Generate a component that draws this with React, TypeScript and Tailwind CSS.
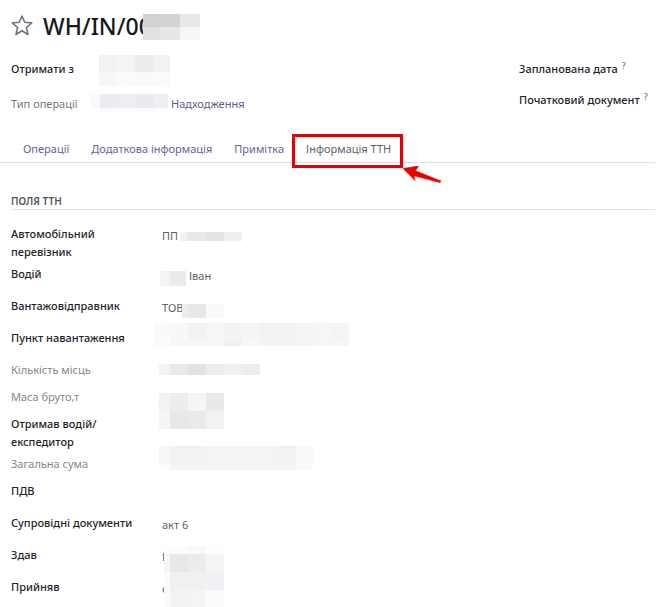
import type { ReactNode } from "react";

type MaskProps = { cols: number[]; rows: number[]; colors: string[]; className: string };

/* Pixelated block that hides private data. */
function Mask({ cols, rows, colors, className }: MaskProps) {
  return (
    <span
      aria-hidden="true"
      className={`pointer-events-none absolute z-10 grid ${className}`}
      style={{
        gridTemplateColumns: cols.map((c) => `${c}px`).join(" "),
        gridTemplateRows: rows.map((r) => `${r}px`).join(" "),
      }}
    >
      {colors.map((color, i) => (
        <span key={i} style={{ backgroundColor: color }} />
      ))}
    </span>
  );
}

type FieldProps = { label: string; muted?: boolean; space: string; children?: ReactNode };

function Field({ label, muted, space, children }: FieldProps) {
  return (
    <div className={`flex ${space}`}>
      <dt className={`w-[151px] shrink-0 pr-5 ${muted ? "text-[#83878c]" : "font-medium text-[#1f2329]"}`}>{label}</dt>
      <dd className="relative min-w-0 flex-1 pt-0.5 text-[#5c6168]">{children}</dd>
    </div>
  );
}

function Help() {
  return <sup className="ml-1 text-[9px] leading-none font-normal text-[#5c5a8c]">?</sup>;
}

const tabs = ["Операції", "Додаткова інформація", "Примітка"];

export default function App() {
  return (
    <main className="min-h-screen overflow-hidden bg-white pr-[5px] font-['Noto_Sans','Open_Sans',sans-serif] text-[11px] leading-[18px]">
      <header className="flex items-center gap-2.5 pt-2 pl-[11px]">
        <button type="button" aria-label="Обране" className="text-[#6f757c]">
          <svg width="22" height="22" viewBox="0 0 22 22" fill="none" stroke="currentColor" strokeWidth="1.6" strokeLinejoin="round">
            <path d="M11 1 13.7 7.3 20.7 7.9 15.4 12.5 17 19.5 11 15.8 5 19.5 6.6 12.5 1.3 7.9 8.3 7.3Z" />
          </svg>
        </button>
        <h1 className="relative text-[23px] leading-9 font-medium text-[#15181c]">
          WH/IN/00
          <Mask className="top-1.5 left-[100px]" cols={[17, 20, 20]} rows={[13, 13]} colors={["#d2d2d2", "#d3d3d3", "#e6e8ea", "#e2e2e2", "#e5e6e8", "#f6f6f6"]} />
        </h1>
      </header>

      <div className="flex justify-between pt-4 pl-[11px]">
        <dl>
          <div className="flex pb-[17px]">
            <dt className="w-20 font-medium text-[#1f2329]">Отримати з</dt>
            <dd className="relative">
              <Mask className="-top-[5px] left-2" cols={[18, 18, 18, 17]} rows={[17, 14]} colors={["#f1f2f4", "#f3f4f4", "#ecedef", "#f2f2f3", "#f7f7f7", "#fbfbfb", "#f9f9f9", "#fbfbfb"]} />
            </dd>
          </div>
          <div className="flex">
            <dt className="w-20 text-[#75797e]">Тип операції</dt>
            <dd className="relative pl-20">
              <Mask className="-top-px left-0" cols={[9, 18, 18, 18, 14]} rows={[14, 4]} colors={["#fafafa", "#ecebf2", "#ededf2", "#ebeaf0", "#eeeef4", "#ffffff", "#fbfbfc", "#fcfcfc", "#fbfbfc", "#fcfcfc"]} />
              <a href="#operation" className="text-[#5f5b8e]">Надходження</a>
            </dd>
          </div>
        </dl>
        <dl className="w-[136px] font-medium whitespace-nowrap text-[#1f2329]">
          <dt className="pb-[13px]">Запланована дата<Help /></dt>
          <dt>Початковий документ<Help /></dt>
        </dl>
      </div>

      <nav role="tablist" className="mt-[22px] flex h-7 items-center gap-[22px] border-b border-[#dee0e3] pl-[23px] text-[#68648f]">
        {tabs.map((tab) => (
          <button key={tab} type="button" role="tab" aria-selected="false">{tab}</button>
        ))}
        <button type="button" role="tab" aria-selected="true" className="relative text-[#5c6168]">
          Інформація ТТН
          <span className="absolute -top-1.5 -right-3 -left-3.5 h-[34px] border-[3px] border-[#e60000]" />
          <svg className="absolute top-[26px] left-full ml-3" width="40" height="20" viewBox="0 0 40 20" fill="#e60000">
            <path d="M0 2.5 15.5 0 12.5 4.8 38 15 37 16.5 11 9.8 12 14.5Z" stroke="#e60000" strokeWidth="0.6" />
          </svg>
        </button>
      </nav>

      <section className="pl-[11px]">
        <h2 className="mt-[30px] border-b border-[#dee0e3] text-[10px] leading-4 font-semibold text-[#50555b]">ПОЛЯ ТТН</h2>
        <dl className="pt-[15px]">
          <Field label="Автомобільний перевізник" space="pb-1">
            ПП
            <Mask className="top-[7px] left-[18px]" cols={[7, 19, 18, 18]} rows={[9]} colors={["#f2f2f2", "#e8e9ea", "#e3e4e6", "#efeff0"]} />
          </Field>
          <Field label="Водій" space="pb-3">
            <span className="pl-[27px]">Іван</span>
            <Mask className="top-1.5 -left-0.5" cols={[10, 16]} rows={[15]} colors={["#f4f4f4", "#eaebed"]} />
          </Field>
          <Field label="Вантажовідправник" space="pb-3">
            ТОВ
            <Mask className="top-[7px] left-5" cols={[6, 18, 18]} rows={[14]} colors={["#ededef", "#e8e8e9", "#f9f9f9"]} />
          </Field>
          <Field label="Пункт навантаження" space="pb-3.5">
            <Mask
              className="-top-1.5 -left-2"
              cols={[16, 18, 18, 18, 18, 18, 18, 18, 17, 18, 18]}
              rows={[16, 7]}
              colors={[
                "#fafafa", "#f8f8f8", "#f2f4f3", "#f5f6f5", "#f3f3f3", "#f4f6f6", "#f1f2f3", "#f1f3f4", "#f4f4f4", "#f6f6f6", "#f4f4f4",
                "#fbfbfb", "#f7f7f7", "#f6f7f6", "#f7f7f7", "#f1f1f2", "#f6f7f7", "#f3f3f4", "#f2f3f4", "#f4f4f4", "#f6f6f6", "#f6f6f6",
              ]}
            />
          </Field>
          <Field label="Кількість місць" muted space="pb-[9px]">
            <Mask className="top-[3px] -left-[3px]" cols={[11, 18, 18, 18, 18, 18]} rows={[11]} colors={["#f3f3f3", "#e9e9e9", "#e2e2e2", "#ebecee", "#f0f0ee", "#ecedf0"]} />
          </Field>
          <Field label="Маса бруто,т" muted space="pb-[9px]">
            <Mask className="top-[5px] -left-[3px]" cols={[11, 18, 18, 18]} rows={[18, 18]} colors={["#f2f2f2", "#ebeeec", "#f4f6f5", "#e9e9ec", "#f5f5f5", "#e8e8e8", "#eaeaea", "#f2f2f4"]} />
          </Field>
          <Field label="Отримав водій/експедитор" space="pb-1" />
          <Field label="Загальна сума" muted space="pb-[9px]">
            <Mask
              className="-top-[9px] -left-[3px]"
              cols={[11, 18, 18, 18, 18, 18, 18, 18, 17]}
              rows={[18, 6]}
              colors={[
                "#f7f7f7", "#f2f2f2", "#f2f2f2", "#f3f4f4", "#f3f4f4", "#f3f4f3", "#f4f4f4", "#f2f2f2", "#f9f9f9",
                "#fcfcfc", "#f4f4f4", "#f4f4f4", "#f5f5f5", "#f5f5f5", "#f4f5f5", "#f5f5f5", "#f4f4f4", "#fafafa",
              ]}
            />
          </Field>
          <Field label="ПДВ" space="pb-3.5" />
          <Field label="Супровідні документи" space="pb-3">акт 6</Field>
          <Field label="Здав" space="pb-3">
            І
            <Mask
              className="top-0 left-0.5"
              cols={[6, 18, 18, 18]}
              rows={[8, 18, 18, 17]}
              colors={[
                "#fdfdfd", "#fcfcfc", "#f9f9f9", "#fdfdfd",
                "#f6f6f6", "#e7e8ea", "#ececee", "#f5f5f5",
                "#fafafa", "#f0f0f0", "#f0f0f0", "#f0f1f4",
                "#fafafa", "#f3f3f3", "#f4f4f4", "#fcfcfc",
              ]}
            />
          </Field>
          <Field label="Прийняв" space="pb-2">с</Field>
        </dl>
      </section>
    </main>
  );
}
